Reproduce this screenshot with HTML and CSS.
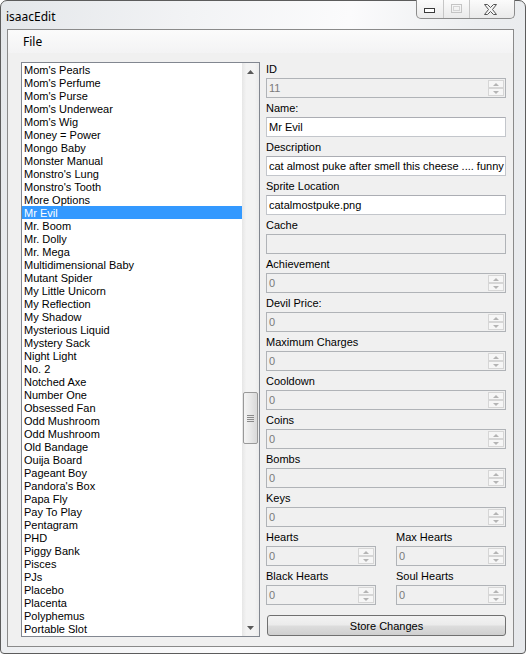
FILE: index.html
```html
<!DOCTYPE html>
<html>
<head>
<meta charset="utf-8">
<link rel="stylesheet" href="styles.css">
</head>
<body>
<div class="window">
  <div class="titlebar">
    <span class="title">isaacEdit</span>
    <div class="caption">
      <div class="cbtn cmin"><svg width="12" height="6" viewBox="0 0 12 6"><rect x="0.5" y="0.5" width="10" height="4" fill="#fff" stroke="#3a3a3a"/></svg></div>
      <div class="cbtn cmax"><svg width="12" height="10" viewBox="0 0 12 10"><rect x="0.5" y="0.5" width="10" height="8" fill="none" stroke="#c4c4c4"/><rect x="2.5" y="2.5" width="6" height="4" fill="none" stroke="#d4d4d4"/></svg></div>
      <div class="cbtn cclose"><svg width="13" height="11" viewBox="0 0 13 11"><polygon points="0.5,0.5 3.5,0.5 6.5,3.5 9.5,0.5 12.5,0.5 8.5,5.5 12.5,10.5 9.5,10.5 6.5,7.5 3.5,10.5 0.5,10.5 4.5,5.5" fill="#f4f4f4" stroke="#555"/></svg></div>
    </div>
  </div>
  <div class="client">
    <div class="menubar"><span class="menu-item">File</span></div>
    <div class="content">
      <div class="listbox">
        <ul class="items">
          <li>Mom's Pearls</li>
          <li>Mom's Perfume</li>
          <li>Mom's Purse</li>
          <li>Mom's Underwear</li>
          <li>Mom's Wig</li>
          <li>Money = Power</li>
          <li>Mongo Baby</li>
          <li>Monster Manual</li>
          <li>Monstro's Lung</li>
          <li>Monstro's Tooth</li>
          <li>More Options</li>
          <li class="selected">Mr Evil</li>
          <li>Mr. Boom</li>
          <li>Mr. Dolly</li>
          <li>Mr. Mega</li>
          <li>Multidimensional Baby</li>
          <li>Mutant Spider</li>
          <li>My Little Unicorn</li>
          <li>My Reflection</li>
          <li>My Shadow</li>
          <li>Mysterious Liquid</li>
          <li>Mystery Sack</li>
          <li>Night Light</li>
          <li>No. 2</li>
          <li>Notched Axe</li>
          <li>Number One</li>
          <li>Obsessed Fan</li>
          <li>Odd Mushroom</li>
          <li>Odd Mushroom</li>
          <li>Old Bandage</li>
          <li>Ouija Board</li>
          <li>Pageant Boy</li>
          <li>Pandora's Box</li>
          <li>Papa Fly</li>
          <li>Pay To Play</li>
          <li>Pentagram</li>
          <li>PHD</li>
          <li>Piggy Bank</li>
          <li>Pisces</li>
          <li>PJs</li>
          <li>Placebo</li>
          <li>Placenta</li>
          <li>Polyphemus</li>
          <li>Portable Slot</li>
        </ul>
        <div class="vscroll">
          <div class="arrow"><svg width="7" height="4" viewBox="0 0 7 4"><polygon points="3.5,0 7,4 0,4" fill="#5a5a5a"/></svg></div>
          <div class="track">
            <div class="thumb"><div class="grip"><i></i><i></i><i></i><i></i></div></div>
          </div>
          <div class="arrow"><svg width="7" height="4" viewBox="0 0 7 4"><polygon points="0,0 7,0 3.5,4" fill="#5a5a5a"/></svg></div>
        </div>
      </div>
      <div class="form">
        <div class="field"><label>ID</label>
          <div class="textbox disabled numeric"><span class="value">11</span><div class="spin"><div class="sb"><i class="up"></i></div><div class="sb"><i class="down"></i></div></div></div></div>
        <div class="field"><label>Name:</label><div class="textbox">Mr Evil</div></div>
        <div class="field"><label>Description</label><div class="textbox">cat almost puke after smell this cheese .... funny</div></div>
        <div class="field"><label>Sprite Location</label><div class="textbox">catalmostpuke.png</div></div>
        <div class="field"><label>Cache</label><div class="textbox disabled"></div></div>
        <div class="field"><label>Achievement</label>
          <div class="textbox disabled numeric"><span class="value">0</span><div class="spin"><div class="sb"><i class="up"></i></div><div class="sb"><i class="down"></i></div></div></div></div>
        <div class="field"><label>Devil Price:</label>
          <div class="textbox disabled numeric"><span class="value">0</span><div class="spin"><div class="sb"><i class="up"></i></div><div class="sb"><i class="down"></i></div></div></div></div>
        <div class="field"><label>Maximum Charges</label>
          <div class="textbox disabled numeric"><span class="value">0</span><div class="spin"><div class="sb"><i class="up"></i></div><div class="sb"><i class="down"></i></div></div></div></div>
        <div class="field"><label>Cooldown</label>
          <div class="textbox disabled numeric"><span class="value">0</span><div class="spin"><div class="sb"><i class="up"></i></div><div class="sb"><i class="down"></i></div></div></div></div>
        <div class="field"><label>Coins</label>
          <div class="textbox disabled numeric"><span class="value">0</span><div class="spin"><div class="sb"><i class="up"></i></div><div class="sb"><i class="down"></i></div></div></div></div>
        <div class="field"><label>Bombs</label>
          <div class="textbox disabled numeric"><span class="value">0</span><div class="spin"><div class="sb"><i class="up"></i></div><div class="sb"><i class="down"></i></div></div></div></div>
        <div class="field"><label>Keys</label>
          <div class="textbox disabled numeric"><span class="value">0</span><div class="spin"><div class="sb"><i class="up"></i></div><div class="sb"><i class="down"></i></div></div></div></div>
        <div class="pair">
          <div class="field"><label>Hearts</label>
            <div class="textbox disabled numeric"><span class="value">0</span><div class="spin"><div class="sb"><i class="up"></i></div><div class="sb"><i class="down"></i></div></div></div></div>
          <div class="field"><label>Max Hearts</label>
            <div class="textbox disabled numeric"><span class="value">0</span><div class="spin"><div class="sb"><i class="up"></i></div><div class="sb"><i class="down"></i></div></div></div></div>
        </div>
        <div class="pair">
          <div class="field"><label>Black Hearts</label>
            <div class="textbox disabled numeric"><span class="value">0</span><div class="spin"><div class="sb"><i class="up"></i></div><div class="sb"><i class="down"></i></div></div></div></div>
          <div class="field"><label>Soul Hearts</label>
            <div class="textbox disabled numeric"><span class="value">0</span><div class="spin"><div class="sb"><i class="up"></i></div><div class="sb"><i class="down"></i></div></div></div></div>
        </div>
        <button class="store">Store Changes</button>
      </div>
    </div>
  </div>
</div>
</body>
</html>
```
FILE: styles.css
```css
* { box-sizing: border-box; }
html, body { margin: 0; padding: 0; }
body {
  width: 526px;
  height: 654px;
  overflow: hidden;
  background: #ffffff;
  font-family: "Liberation Sans", Arial, sans-serif;
  font-size: 11px;
  color: #000;
}
.window {
  width: 526px;
  height: 654px;
  border: 1px solid #5c5c5c;
  border-radius: 7px 7px 4px 4px;
  background: linear-gradient(100deg, #e4e7ea 0%, #f2f3f5 30%, #fbfbfc 55%, #eceef0 75%, #e6e8eb 100%);
  padding: 0 11px 6px 6px;
  display: flex;
  flex-direction: column;
}
.titlebar {
  height: 28px;
  flex: none;
  display: flex;
  align-items: flex-start;
  justify-content: space-between;
}
.title {
  font-family: "Noto Sans", "Open Sans", sans-serif;
  font-size: 12px;
  line-height: 17px;
  margin: 7px 0 0 -1px;
}
.caption {
  display: flex;
  height: 19px;
  margin-top: -1px;
  margin-right: -1px;
  border: 1px solid #8c8c8c;
  border-top: none;
  border-radius: 0 0 5px 5px;
  background: linear-gradient(#fbfbfb, #eaeaea);
  overflow: hidden;
}
.cbtn {
  display: flex;
  align-items: center;
  justify-content: center;
  height: 100%;
}
.cmin { width: 27px; border-right: 1px solid #c6c6c6; padding-top: 3px; }
.cmax { width: 26px; border-right: 1px solid #c6c6c6; }
.cclose { width: 44px; padding-right: 4px; }
.client {
  flex: 1;
  border: 1px solid #8a8a8a;
  background: #f0f0f0;
  display: flex;
  flex-direction: column;
}
.menubar {
  height: 23px;
  flex: none;
  background: linear-gradient(#fbfbfb, #f3f3f4);
  padding-left: 15px;
  font-family: "Noto Sans", "Open Sans", sans-serif;
  font-size: 12px;
  line-height: 23px;
}
.content {
  flex: 1;
  display: flex;
  align-items: flex-start;
  gap: 6px;
  padding: 6px 0 0 13px;
}
.listbox {
  margin-top: 3px;
  width: 239px;
  height: 575px;
  border: 1px solid #828790;
  background: #fff;
  display: flex;
}
.items {
  list-style: none;
  margin: 0;
  padding: 0;
  flex: 1;
  overflow: hidden;
}
.items li {
  height: 13px;
  line-height: 15px;
  padding-left: 2px;
  white-space: nowrap;
  overflow: hidden;
}
.items li.selected {
  background: #3399ff;
  color: #fff;
}
.vscroll {
  width: 17px;
  display: flex;
  flex-direction: column;
  background: linear-gradient(to right, #e6e6e6, #f3f3f3 25%, #f3f3f3 75%, #ebebeb);
}
.arrow {
  height: 17px;
  flex: none;
  display: flex;
  align-items: center;
  justify-content: center;
}
.track {
  flex: 1;
  display: flex;
  flex-direction: column;
}
.thumb {
  margin-top: 312px;
  margin-left: 1px;
  width: 15px;
  height: 52px;
  border: 1px solid #999;
  border-radius: 2px;
  background: linear-gradient(to right, #f4f4f4, #e8e8e8 50%, #d9d9d9);
  display: flex;
  align-items: center;
  justify-content: center;
}
.grip {
  display: flex;
  flex-direction: column;
  gap: 1px;
}
.grip i {
  display: block;
  width: 7px;
  height: 1px;
  background: #8a8a8a;
}
.form {
  width: 240px;
  display: flex;
  flex-direction: column;
}
.field label {
  display: block;
  height: 19px;
  padding-top: 4px;
  line-height: 13px;
  white-space: nowrap;
}
.textbox {
  height: 20px;
  border: 1px solid #c3c6cb;
  border-top-color: #abadb3;
  background: #fff;
  padding-left: 2px;
  line-height: 19px;
  white-space: nowrap;
  overflow: hidden;
}
.textbox.disabled {
  background: #f0f0f0;
  border-color: #b0b3b7;
  color: #7a7a7a;
}
.numeric {
  display: flex;
  padding-right: 1px;
}
.value { flex: 1; }
.spin {
  width: 16px;
  display: flex;
  flex-direction: column;
  padding: 1px 0;
}
.sb {
  flex: 1;
  border: 1px solid #d6d6d6;
  background: #f6f6f6;
  display: flex;
  align-items: center;
  justify-content: center;
}
.sb i {
  display: block;
  width: 0;
  height: 0;
  border-left: 3px solid transparent;
  border-right: 3px solid transparent;
}
.sb i.up { border-bottom: 3px solid #b4b4b4; }
.sb i.down { border-top: 3px solid #b4b4b4; }
.pair {
  display: grid;
  grid-template-columns: 110px 110px;
  column-gap: 20px;
}
.store {
  margin-top: 10px;
  margin-left: 1px;
  width: 239px;
  height: 21px;
  border: 1px solid #707070;
  border-radius: 3px;
  background: linear-gradient(#f3f3f3 0%, #ebebeb 48%, #dddddd 52%, #cfcfcf 100%);
  font-family: "Liberation Sans", Arial, sans-serif;
  font-size: 11px;
  color: #000;
  padding: 0;
}
```
